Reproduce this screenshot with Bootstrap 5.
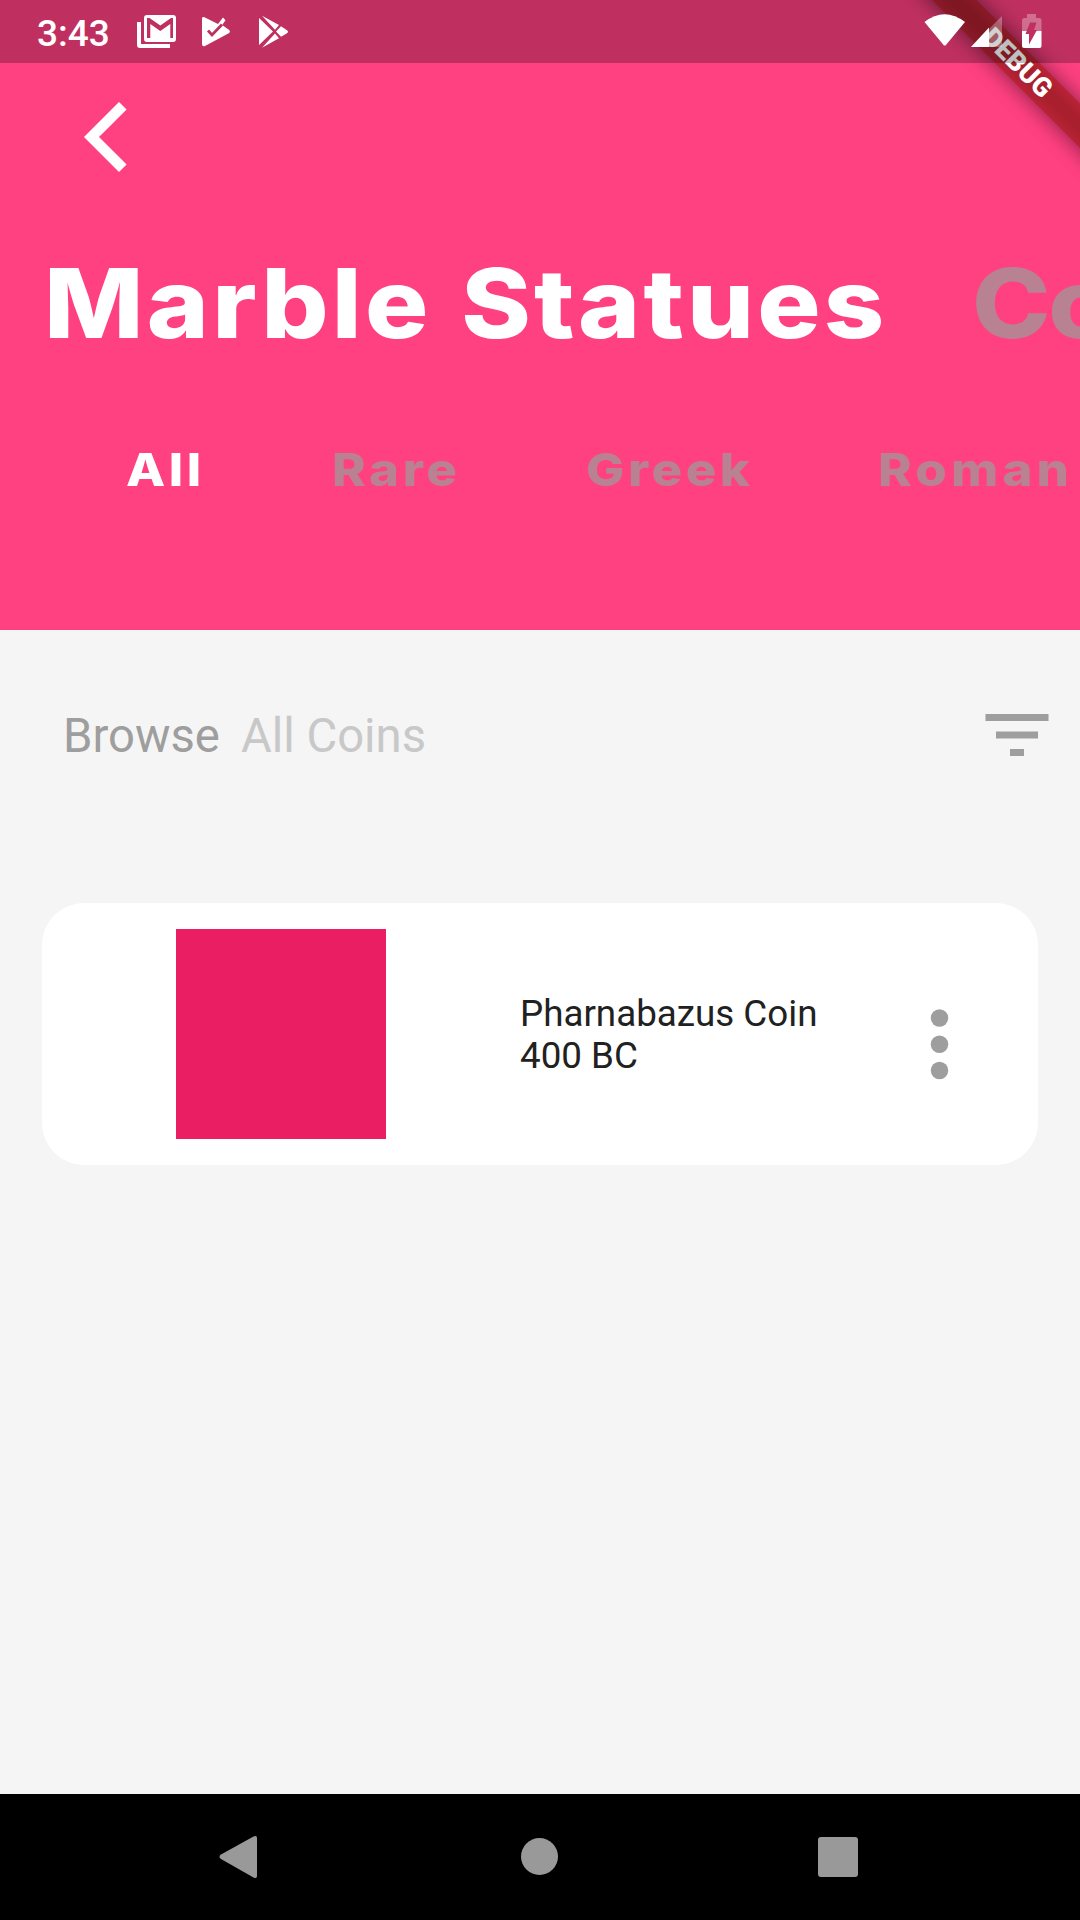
<!DOCTYPE html>
<html lang="en">
<head>
<meta charset="utf-8">
<meta name="viewport" content="width=device-width, initial-scale=1">
<title>Coins</title>
<link href="https://cdn.jsdelivr.net/npm/bootstrap@5.3.0/dist/css/bootstrap.min.css" rel="stylesheet">
<style>
body{font-family:Roboto,"Liberation Sans",sans-serif;background:#f5f5f5;letter-spacing:0}
svg{display:block;flex:none}
.screen{width:1080px;height:1920px}
.hero{height:630px;background:#ff4081}
.statusbar{height:63px;background:rgba(0,0,0,.25);z-index:2;padding-left:37px}
.clock{font-size:37px;font-weight:500;line-height:61px;width:99px;padding-top:4px}
.ribbon{z-index:1}
.ribbon text{font-family:Roboto,sans-serif;font-weight:900;font-size:26.8px}
.backrow{height:148px;padding:39px 0 0 84px}
.heading,.tab{font-family:Inter,"Open Sans",sans-serif;font-weight:800;color:#fff;white-space:nowrap}
.heading{font-size:96px;line-height:120px;letter-spacing:2.9px;word-spacing:3px}
.heading.next{letter-spacing:-2px}
.titles{padding-left:44px;height:184px;padding-top:32px}
.stretch{display:inline-block;transform-origin:0 50%;transform:scaleX(1.1)}
.heading.first{width:928px}
.tab{font-size:45.5px;line-height:60px;letter-spacing:3.2px}
.tab .stretch{transform:scaleX(1.12)}
.tab .wide{letter-spacing:3.7px}
.faded{color:#b98293}
.tabs{padding-left:126px;padding-top:45px}
.browse{height:273px;padding:63px 21px 0 63px}
.browse-text{font-size:47.25px;line-height:84px;color:#9e9e9e;padding-top:1px}
.browse-text .sub{color:#c8c8c8;margin-left:21px}
.coin{margin:0 42px;height:262px;border-radius:42px;background:#fff;padding-left:134px}
.swatch{width:210px;height:210px;background:#e91e63}
.coin-name{font-size:36.75px;line-height:42px;color:#212121;margin-left:134px;width:367px;padding-top:2px}
.more{margin-top:2px}
.navkeys{height:126px}
</style>
</head>
<body>
<div class="screen d-flex flex-column overflow-hidden">
  <header class="hero position-relative overflow-hidden">
    <div class="statusbar position-relative d-flex align-items-center text-white">
      <div class="clock">3:43</div>
      <svg width="160" height="63" viewBox="136 0 160 63" fill="#fff">
        <path d="M137 22h4v22h29v4h-30q-3 0-3-3z"/>
        <path fill-rule="evenodd" d="M147 15h26q3 0 3 3v21q0 3-3 3h-26q-3 0-3-3V18q0-3 3-3zM147 18v20h3.300V24l10 7 10-7v14h2.700V18h-2l-10.700 7.500L149.500 18z"/>
        <path fill-rule="evenodd" d="M204 17l14 7 5-6.500 2.500 2.800-3.300 4.700 7 5q1.500 1.500 0 3L205 46q-3 1-3-2V18.500q0-2 2-1.500z"/>
        <path d="M208 30.500l4 4.500 10-10.500" fill="none" stroke="#bf3061" stroke-width="2.800"/>
        <path d="M259 18v27l14-13.500zM262 15.800l17 9.200-4 4.700zM262 47.700l17-9.500-4-4.700zM281 26.200l6 4q2 1.600 0 3l-6 3.600-5-5.200z"/>
      </svg>
      <svg class="ms-auto" width="160" height="63" viewBox="920 0 160 63" fill="#fff">
        <path d="M924.500 22q20-15.500 40.500 0L945.500 45.500h-1.500z"/>
        <path d="M1002 16v31h-31z" opacity=".3"/>
        <path d="M989 27.500V47h-18z"/>
        <path d="M1027 14h9v4h3q2.500 0 2.500 2.500V31H1022V20.500q0-2.500 2.500-2.500h2.500z" opacity=".3"/>
        <path d="M1022 31h19.500v15q0 2-2 2h-15.500q-2 0-2-2z"/>
        <path d="M1030 22.500h6.500l-2.500 7.500h3L1029 44.500V34h-3.500z" fill="#bf3061"/>
      </svg>
    </div>
    <svg class="ribbon position-absolute top-0 end-0" width="200" height="200" viewBox="880 0 200 200">
      <defs><filter id="soft" filterUnits="userSpaceOnUse" x="780" y="-100" width="400" height="400"><feGaussianBlur stdDeviation="10.400"/></filter></defs>
      <path d="M872-60H916L1160 184V228z" fill="#000" fill-opacity=".5" filter="url(#soft)"/>
      <path d="M932 0h44.500L1080 103.500V148z" fill="#b71c1c" fill-opacity=".627"/>
      <text transform="translate(1018 62.500) rotate(45)" text-anchor="middle" y="9.500" fill="#fff">DEBUG</text>
    </svg>
    <div class="backrow">
      <svg width="44" height="70" viewBox="84 102 44 70"><path d="M84 137l35-35 7.600 7.400L99 137l27.600 27.600L119 172z" fill="#fff"/></svg>
    </div>
    <div class="titles d-flex">
      <div class="heading first flex-shrink-0"><span class="stretch">Marble Statues</span></div>
      <div class="heading next flex-shrink-0"><span class="stretch faded">Coins</span></div>
    </div>
    <nav class="tabs d-flex">
      <div class="tab flex-shrink-0" style="width:206px"><span class="stretch">All</span></div>
      <div class="tab flex-shrink-0" style="width:254px"><span class="stretch faded">Rare</span></div>
      <div class="tab flex-shrink-0" style="width:292px"><span class="stretch faded">Greek</span></div>
      <div class="tab flex-shrink-0"><span class="stretch faded wide">Roman</span></div>
    </nav>
  </header>
  <main class="flex-grow-1">
    <div class="browse d-flex justify-content-between align-items-start">
      <div class="browse-text">Browse<span class="sub">All Coins</span></div>
      <svg width="84" height="84" viewBox="0 0 24 24" fill="#9e9e9e"><path d="M10 18h4v-2h-4v2zM3 6v2h18V6H3zm3 7h12v-2H6v2z"/></svg>
    </div>
    <div class="coin d-flex align-items-center">
      <div class="swatch"></div>
      <div class="coin-name">Pharnabazus Coin<br>400 BC</div>
      <svg class="more" width="105" height="105" viewBox="0 0 24 24" fill="#9e9e9e"><circle cx="12" cy="8" r="2"/><circle cx="12" cy="14" r="2"/><circle cx="12" cy="20" r="2"/></svg>
    </div>
  </main>
  <footer class="navkeys bg-black">
    <svg width="1080" height="126" viewBox="0 1794 1080 126" fill="#999">
      <path d="M221 1854.500l32.500-18q3.500-1.500 3.500 1.500v38q0 3-3.500 1.500l-32.500-18.500q-3-2.300 0-4.500z"/>
      <circle cx="539.500" cy="1856.500" r="18.500"/>
      <rect x="818" y="1837" width="40" height="40" rx="3"/>
    </svg>
  </footer>
</div>
<script src="https://cdn.jsdelivr.net/npm/bootstrap@5.3.0/dist/js/bootstrap.bundle.min.js"></script>
</body>
</html>
